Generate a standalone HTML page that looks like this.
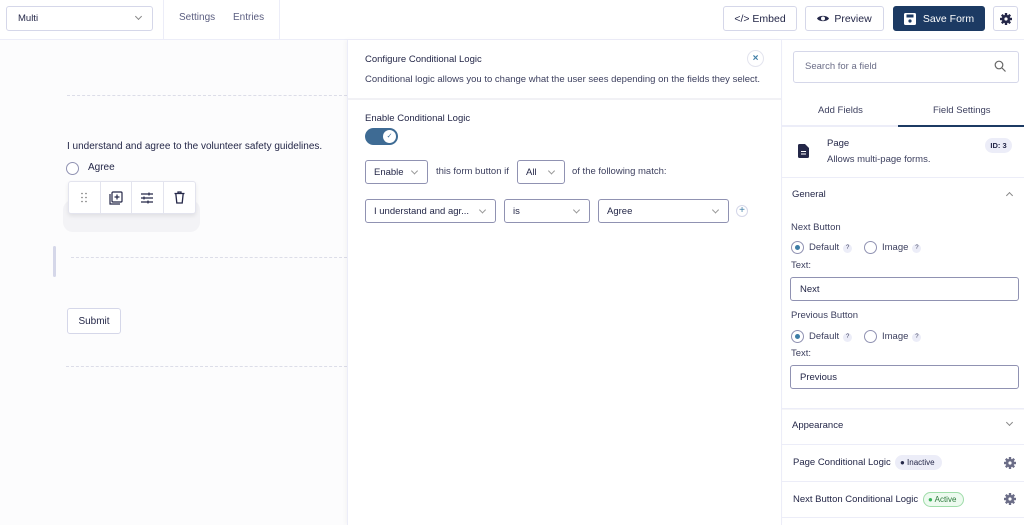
<!DOCTYPE html><html><head><style>
*{box-sizing:border-box;margin:0;padding:0}
body{width:1024px;height:525px;overflow:hidden;font-family:"Liberation Sans",sans-serif;color:#242748;background:#fff;position:relative;font-size:9.5px}
.a{position:absolute}
.btn{position:absolute;border:1px solid #d5d7e9;border-radius:3px;background:#fff;display:flex;align-items:center;justify-content:center;font-size:10.5px;color:#242748}
.sel{position:absolute;border:1px solid #9092b2;border-radius:3px;background:#fff;font-size:9.5px;display:flex;align-items:center;padding-left:8px;color:#242748}
.sel:after{content:"";position:absolute;right:10px;top:50%;width:4px;height:4px;border-right:1px solid #999;border-bottom:1px solid #999;transform:translateY(-70%) rotate(45deg)}
.dash{position:absolute;border-top:1px dashed #dcdde8;height:0}
.rad{position:absolute;width:13px;height:13px;border:1px solid #9092b2;border-radius:50%;background:#fff}
.rad.on:after{content:"";position:absolute;left:3px;top:3px;width:5px;height:5px;border-radius:50%;background:#3e7da6}
.q{display:inline-block;width:9px;height:9px;border-radius:50%;background:#ecedf8;font-size:6px;text-align:center;line-height:9px;margin-left:4px;vertical-align:1px}
.inp{position:absolute;left:790px;width:229px;height:24px;border:1px solid #9092b2;border-radius:3px;padding-left:9px;display:flex;align-items:center;font-size:9.5px}
.row{position:absolute;left:782px;width:242px;border-top:1px solid #ecedf8}
.t{font-size:9.5px;color:#3c3f5e}
</style></head><body>
<svg width="0" height="0" style="position:absolute"><defs><g id="gear"><g><rect x="4.8" y="0" width="2.4" height="12" rx=".4"/><rect x="4.8" y="0" width="2.4" height="12" rx=".4" transform="rotate(45 6 6)"/><rect x="4.8" y="0" width="2.4" height="12" rx=".4" transform="rotate(90 6 6)"/><rect x="4.8" y="0" width="2.4" height="12" rx=".4" transform="rotate(135 6 6)"/><circle cx="6" cy="6" r="4.3"/></g><circle cx="6" cy="6" r="1.6" fill="#fff"/></g></defs></svg>
<!-- top bar -->
<div class="a" style="left:0;top:0;width:1024px;height:40px;border-bottom:1px solid #ecedf8"></div>
<div class="btn" style="left:6px;top:6px;width:147px;height:25px;justify-content:flex-start;padding-left:11px;font-size:9.5px">Multi</div>
<div class="a" style="left:136px;top:14px;width:5px;height:5px;border-right:1px solid #888;border-bottom:1px solid #888;transform:rotate(45deg)"></div>
<div class="a" style="left:163px;top:0;width:1px;height:40px;background:#ecedf8"></div>
<div class="a" style="left:279px;top:0;width:1px;height:40px;background:#ecedf8"></div>
<div class="a" style="left:179px;top:12px;font-size:10px;color:#5b5e80">Settings</div>
<div class="a" style="left:233px;top:12px;font-size:10px;color:#5b5e80">Entries</div>
<div class="btn" style="left:723px;top:6px;width:74px;height:25px">&lt;/&gt;&nbsp;Embed</div>
<div class="btn" style="left:805px;top:6px;width:79px;height:25px"><svg width="12" height="9" viewBox="0 0 12 9" style="margin-right:5px"><path d="M0 4.5C2 1 10 1 12 4.5C10 8 2 8 0 4.5Z" fill="#242748"/><circle cx="6" cy="4.5" r="2" fill="#fff"/></svg>Preview</div>
<div class="btn" style="left:893px;top:6px;width:92px;height:25px;background:#1c3a63;border-color:#1c3a63;color:#fff"><svg width="12" height="12" viewBox="0 0 12 12" style="margin-right:7px"><rect x="0" y="0" width="12" height="12" rx="1.5" fill="#fff"/><rect x="2.5" y="1.5" width="7" height="3" fill="#1c3a63"/><circle cx="6" cy="8" r="1.6" fill="#1c3a63"/></svg>Save Form</div>
<div class="btn" style="left:993px;top:6px;width:25px;height:25px"><svg width="12" height="12" viewBox="0 0 12 12" fill="#242748"><use href="#gear"/></svg></div>
<!-- left canvas -->
<div class="a" style="left:0;top:40px;width:347px;height:485px;background:#fcfcfd"></div>
<div class="dash" style="left:67px;top:95px;width:280px"></div>
<div class="a" style="left:67px;top:141px;font-size:10px;color:#242748">I understand and agree to the volunteer safety guidelines.</div>
<div class="rad" style="left:66px;top:162px"></div>
<div class="a" style="left:88px;top:162px;font-size:10px">Agree</div>
<div class="a" style="left:63px;top:200px;width:137px;height:32px;border-radius:10px;background:#f3f3f6"></div>
<div class="a" style="left:68px;top:181px;width:128px;height:33px;background:#fff;border:1px solid #e3e4ee;border-radius:3px;box-shadow:0 2px 4px rgba(0,0,0,.08);display:flex">
<div style="width:32px;border-right:1px solid #e3e4ee;display:flex;align-items:center;justify-content:center"><svg width="6" height="11"><g fill="#777"><circle cx="1" cy="1.5" r=".8"/><circle cx="5" cy="1.5" r=".8"/><circle cx="1" cy="5.5" r=".8"/><circle cx="5" cy="5.5" r=".8"/><circle cx="1" cy="9.5" r=".8"/><circle cx="5" cy="9.5" r=".8"/></g></svg></div>
<div style="width:32px;border-right:1px solid #e3e4ee;display:flex;align-items:center;justify-content:center"><svg width="14" height="14" viewBox="0 0 14 14" fill="none" stroke="#242748" stroke-width="1.2"><path d="M1 3v10h10"/><rect x="3" y="1" width="10" height="10" rx="1"/><path d="M8 3.5v5M5.5 6h5"/></svg></div>
<div style="width:32px;border-right:1px solid #e3e4ee;display:flex;align-items:center;justify-content:center"><svg width="14" height="12" viewBox="0 0 14 12" stroke="#242748" stroke-width="1.2"><path d="M1 2h12M1 6h12M1 10h12"/><path d="M9 0.5v3M4 4.5v3M8 8.5v3"/></svg></div>
<div style="width:32px;display:flex;align-items:center;justify-content:center"><svg width="11" height="13" viewBox="0 0 11 13" fill="none" stroke="#242748" stroke-width="1.3"><path d="M0.5 2.5h10M4 2.5V1h3v1.5M1.8 2.5l1 9.5h5.4l1-9.5"/></svg></div>
</div>
<div class="a" style="left:53px;top:246px;width:3px;height:31px;background:#d5d7e9;border-radius:2px"></div>
<div class="dash" style="left:71px;top:257px;width:276px"></div>
<div class="btn" style="left:67px;top:308px;width:54px;height:26px;font-size:10px">Submit</div>
<div class="dash" style="left:66px;top:366px;width:281px"></div>
<!-- middle panel -->
<div class="a" style="left:347px;top:40px;width:435px;height:485px;background:#fff;border-left:1px solid #ecedf8;box-shadow:-2px 0 4px rgba(0,0,0,.03)"></div>
<div class="a" style="left:348px;top:98px;width:433px;height:2px;background:#f1f1f5"></div>
<div class="a" style="left:365px;top:54px;font-size:9.5px">Configure Conditional Logic</div>
<div class="a" style="left:365px;top:74px;font-size:9.5px;color:#3c3f5e">Conditional logic allows you to change what the user sees depending on the fields they select.</div>
<div class="a" style="left:747px;top:50px;width:17px;height:17px;border-radius:50%;border:1px solid #e3e4ee;color:#3e7da6;font-size:10px;font-weight:bold;text-align:center;line-height:15px">×</div>
<div class="a" style="left:365px;top:113px;font-size:9.5px">Enable Conditional Logic</div>
<div class="a" style="left:365px;top:128px;width:33px;height:17px;border-radius:9px;background:#3e6b94"><div style="position:absolute;right:2px;top:2px;width:13px;height:13px;border-radius:50%;background:#fff;font-size:7px;color:#3e6b94;text-align:center;line-height:13px">✓</div></div>
<div class="sel" style="left:365px;top:160px;width:63px;height:24px">Enable</div>
<div class="a" style="left:436px;top:166px" class="t"><span class="t">this form button if</span></div>
<div class="sel" style="left:517px;top:160px;width:48px;height:24px">All</div>
<div class="a" style="left:572px;top:166px"><span class="t">of the following match:</span></div>
<div class="sel" style="left:365px;top:199px;width:131px;height:24px">I understand and agr...</div>
<div class="sel" style="left:504px;top:199px;width:86px;height:24px">is</div>
<div class="sel" style="left:598px;top:199px;width:131px;height:24px">Agree</div>
<div class="a" style="left:736px;top:205px;width:12px;height:12px;border-radius:50%;border:1px solid #d5d7e9;color:#3e7da6;font-size:10px;text-align:center;line-height:10px">+</div>
<!-- right panel -->
<div class="a" style="left:781px;top:40px;width:1px;height:485px;background:#ecedf8"></div>
<div class="a" style="left:793px;top:51px;width:226px;height:32px;border:1px solid #d5d7e9;border-radius:3px;padding-left:11px;line-height:30px;font-size:9.5px;color:#6b6d87">Search for a field</div>
<svg class="a" style="left:994px;top:60px" width="12" height="12" viewBox="0 0 12 12" fill="none" stroke="#666" stroke-width="1.2"><circle cx="5" cy="5" r="3.8"/><path d="M8 8l3.5 3.5"/></svg>
<div class="a" style="left:782px;top:125px;width:242px;height:2px;background:#ecedf8"></div>
<div class="a" style="left:898px;top:125px;width:126px;height:2px;background:#1c3a63"></div>
<div class="a" style="left:818px;top:105px"><span class="t">Add Fields</span></div>
<div class="a" style="left:933px;top:105px"><span class="t">Field Settings</span></div>
<svg class="a" style="left:798px;top:144px" width="11" height="14" viewBox="0 0 11 14"><path d="M0 1.5Q0 0 1.5 0H7L11 4V12.5Q11 14 9.5 14H1.5Q0 14 0 12.5Z" fill="#242748"/><path d="M3 7.5h5M3 10h5" stroke="#fff" stroke-width="1"/></svg>
<div class="a" style="left:827px;top:138px;font-size:9.5px">Page</div>
<div class="a" style="left:827px;top:154px"><span class="t">Allows multi-page forms.</span></div>
<div class="a" style="left:985px;top:138px;width:27px;height:15px;border-radius:8px;background:#ecedf8;font-size:7.5px;font-weight:bold;text-align:center;line-height:15px">ID: 3</div>
<div class="row" style="top:177px"></div>
<div class="a" style="left:792px;top:189px;font-size:9.5px">General</div>
<div class="a" style="left:1007px;top:193px;width:5px;height:5px;border-left:1px solid #888;border-top:1px solid #888;transform:rotate(45deg)"></div>
<div class="a" style="left:791px;top:222px"><span class="t">Next Button</span></div>
<div class="rad on" style="left:791px;top:241px"></div>
<div class="a" style="left:809px;top:242px"><span class="t">Default<span class="q">?</span></span></div>
<div class="rad" style="left:864px;top:241px"></div>
<div class="a" style="left:882px;top:242px"><span class="t">Image<span class="q">?</span></span></div>
<div class="a" style="left:791px;top:260px"><span class="t">Text:</span></div>
<div class="inp" style="top:277px">Next</div>
<div class="a" style="left:791px;top:310px"><span class="t">Previous Button</span></div>
<div class="rad on" style="left:791px;top:330px"></div>
<div class="a" style="left:809px;top:331px"><span class="t">Default<span class="q">?</span></span></div>
<div class="rad" style="left:864px;top:330px"></div>
<div class="a" style="left:882px;top:331px"><span class="t">Image<span class="q">?</span></span></div>
<div class="a" style="left:791px;top:348px"><span class="t">Text:</span></div>
<div class="inp" style="top:365px">Previous</div>
<div class="row" style="top:408px;height:2px;background:#f5f5f8"></div>
<div class="a" style="left:792px;top:420px;font-size:9.5px">Appearance</div>
<div class="a" style="left:1007px;top:420px;width:5px;height:5px;border-right:1px solid #888;border-bottom:1px solid #888;transform:rotate(45deg)"></div>
<div class="row" style="top:444px"></div>
<div class="a" style="left:793px;top:457px;font-size:9.5px">Page Conditional Logic</div>
<div class="a" style="left:895px;top:455px;width:47px;height:15px;border-radius:8px;background:#ecedf8;font-size:8px;line-height:15px;padding-left:5px">● Inactive</div>
<div class="row" style="top:481px"></div>
<div class="a" style="left:793px;top:494px;font-size:9.5px">Next Button Conditional Logic</div>
<div class="a" style="left:923px;top:492px;width:41px;height:15px;border-radius:8px;background:#edfaef;border:1px solid #9fdca9;color:#2c7a3b;font-size:8px;line-height:13px;padding-left:4px"><span style="color:#3bb35a">●</span> Active</div>
<div class="row" style="top:517px"></div>
<svg class="a" style="left:1004px;top:457px" width="12" height="12" viewBox="0 0 12 12" fill="#6b6d87"><use href="#gear"/></svg>
<svg class="a" style="left:1004px;top:493px" width="12" height="12" viewBox="0 0 12 12" fill="#6b6d87"><use href="#gear"/></svg>
</body></html>
